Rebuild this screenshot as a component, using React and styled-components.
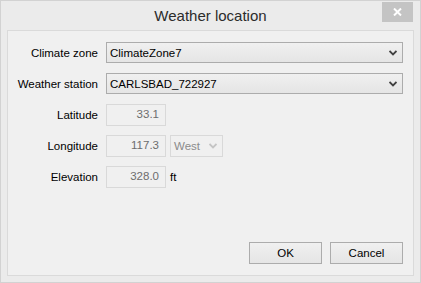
import React from "react";
import styled, { createGlobalStyle } from "styled-components";

const Global = createGlobalStyle`
  html, body { margin: 0; padding: 0; background: #ebebeb; }
  * { box-sizing: border-box; }
`;

const Window = styled.div`
  width: 421px;
  height: 283px;
  background: #ebebeb;
  border: 1px solid #d2d2d2;
  display: flex;
  flex-direction: column;
  font-family: "Liberation Sans", Arial, sans-serif;
  font-size: 11.5px;
  color: #000;
  position: relative;
`;

const TitleBar = styled.div`
  height: 29px;
  display: flex;
  align-items: center;
  justify-content: center;
  font-size: 15px;
  color: #2b2b2b;
  padding-bottom: 1px;
`;

const CloseButton = styled.div`
  position: absolute;
  top: 1px;
  right: 7px;
  width: 31px;
  height: 20px;
  background: #c4c4c4;
  display: flex;
  align-items: center;
  justify-content: center;
`;

const Panel = styled.div`
  flex: 1;
  margin: 0 6px 6px 6px;
  background: #f0f0f0;
  border: 1px solid #dadada;
  display: flex;
  flex-direction: column;
  padding: 6px 10px 11px 0;
`;

const Form = styled.div`
  display: grid;
  grid-template-columns: 90px 1fr;
  column-gap: 8px;
  grid-auto-rows: 31px;
  align-items: center;
`;

const Label = styled.div`
  text-align: right;
  white-space: nowrap;
`;

const Inline = styled.div`
  display: flex;
  align-items: center;
  gap: 4px;
`;

const Combo = styled.div`
  height: 21px;
  border: 1px solid #acacac;
  background: linear-gradient(#f0f0f0, #e5e5e5);
  display: flex;
  align-items: center;
  padding: 0 5px 0 3px;
  color: ${(p) => (p.disabled ? "#8b8b8b" : "#000")};
  border-color: ${(p) => (p.disabled ? "#d9d9d9" : "#acacac")};
  background: ${(p) => (p.disabled ? "#f0f0f0" : "linear-gradient(#f0f0f0, #e5e5e5)")};
  width: ${(p) => p.w || "auto"};
  height: ${(p) => p.h || "21px"};
`;

const ComboText = styled.span`
  flex: 1;
  white-space: nowrap;
`;

const Field = styled.div`
  width: 60px;
  height: 22px;
  border: 1px solid #d9d9d9;
  background: #f0f0f0;
  color: #6d6d6d;
  text-align: right;
  padding: 0 6px 0 0;
  line-height: 18px;
`;

const Unit = styled.span`
  margin-left: 0;
`;

const Footer = styled.div`
  margin-top: auto;
  display: flex;
  justify-content: flex-end;
  gap: 8px;
`;

const Button = styled.div`
  width: 73px;
  height: 22px;
  border: 1px solid #acacac;
  background: linear-gradient(#f0f0f0, #e5e5e5);
  display: flex;
  align-items: center;
  justify-content: center;
`;

const Chevron = ({ color = "#404040" }) => (
  <svg width="8" height="6" viewBox="0 0 8 6">
    <path d="M0.5 1 L4 4.5 L7.5 1" fill="none" stroke={color} strokeWidth="1.8" />
  </svg>
);

export default function App() {
  return (
    <>
      <Global />
      <Window>
        <TitleBar>Weather location</TitleBar>
        <CloseButton>
          <svg width="9" height="8" viewBox="0 0 9 8">
            <path d="M1 0.5 L8 7.5 M8 0.5 L1 7.5" stroke="#fff" strokeWidth="2" />
          </svg>
        </CloseButton>
        <Panel>
          <Form>
            <Label>Climate zone</Label>
            <Combo>
              <ComboText>ClimateZone7</ComboText>
              <Chevron />
            </Combo>
            <Label>Weather station</Label>
            <Combo>
              <ComboText>CARLSBAD_722927</ComboText>
              <Chevron />
            </Combo>
            <Label>Latitude</Label>
            <Field>33.1</Field>
            <Label>Longitude</Label>
            <Inline>
              <Field>117.3</Field>
              <Combo disabled w="53px" h="22px">
                <ComboText>West</ComboText>
                <Chevron color="#c4c4c4" />
              </Combo>
            </Inline>
            <Label>Elevation</Label>
            <Inline>
              <Field>328.0</Field>
              <Unit>ft</Unit>
            </Inline>
          </Form>
          <Footer>
            <Button>OK</Button>
            <Button>Cancel</Button>
          </Footer>
        </Panel>
      </Window>
    </>
  );
}
